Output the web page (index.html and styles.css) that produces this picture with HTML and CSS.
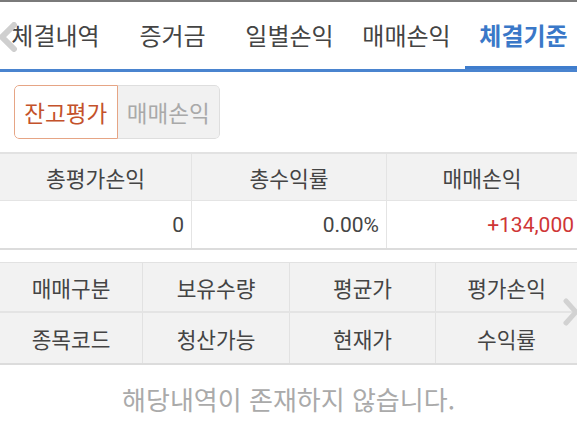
FILE: index.html
```html
<!DOCTYPE html>
<html lang="ko">
<head>
<meta charset="utf-8">
<link rel="stylesheet" href="styles.css">
</head>
<body>
<div class="page">
  <nav class="tabs">
    <div class="tab">체결내역</div>
    <div class="tab">증거금</div>
    <div class="tab">일별손익</div>
    <div class="tab">매매손익</div>
    <div class="tab active">체결기준</div>
    <svg class="chev chev-left" width="20" height="30" viewBox="0 0 20 30"><path d="M16 3 L4 15 L16 27" fill="none" stroke="#cfcfcf" stroke-width="6" stroke-linecap="round" stroke-linejoin="round"/></svg>
  </nav>

  <div class="seg-wrap">
    <div class="seg">
      <div class="seg-btn on">잔고평가</div>
      <div class="seg-btn">매매손익</div>
    </div>
  </div>

  <div class="sum">
    <div class="sum-h">총평가손익</div>
    <div class="sum-h">총수익률</div>
    <div class="sum-h">매매손익</div>
    <div class="sum-d">0</div>
    <div class="sum-d">0.00%</div>
    <div class="sum-d red last">+134,000</div>
  </div>

  <div class="list-wrap">
    <div class="list">
      <div class="lh">매매구분</div>
      <div class="lh">보유수량</div>
      <div class="lh">평균가</div>
      <div class="lh">평가손익</div>
      <div class="lh">종목코드</div>
      <div class="lh">청산가능</div>
      <div class="lh">현재가</div>
      <div class="lh">수익률</div>
    </div>
    <svg class="chev chev-right" width="16" height="28" viewBox="0 0 16 28"><path d="M3 3 L13 14 L3 25" fill="none" stroke="#d2d2d2" stroke-width="5" stroke-linecap="round" stroke-linejoin="round"/></svg>
  </div>

  <div class="empty">해당내역이 존재하지 않습니다.</div>
</div>
</body>
</html>
```

FILE: styles.css
```css
* { box-sizing: border-box; }
html, body { margin: 0; padding: 0; background: #fff; }
body {
  font-family: Roboto, "Noto Sans CJK KR", sans-serif;
  color: #444;
  width: 577px;
  height: 423px;
  overflow: hidden;
}
.page { width: 577px; }

.tabs {
  position: relative;
  display: flex;
  border-top: 2px solid #7a7a7a;
  border-bottom: 3px solid #4a84cf;
  height: 72px;
  overflow: hidden;
}
.tab {
  flex: 0 0 117px;
  display: flex;
  align-items: center;
  justify-content: center;
  font-size: 24px;
  color: #444;
  padding-bottom: 3px;
  white-space: nowrap;
}
.tab:first-child { margin-left: -3px; }
.tab.active {
  color: #3a78c8;
  font-weight: bold;
  box-shadow: inset 0 -3px 0 #3f7dcd;
}
.chev { position: absolute; }
.chev-left { left: -2px; top: 20px; }

.seg-wrap { padding: 13px 14px 13px; }
.seg {
  display: flex;
  width: 206px;
  height: 54px;
  border-radius: 5px;
  overflow: hidden;
}
.seg-btn {
  flex: 1;
  display: flex;
  align-items: center;
  justify-content: center;
  font-size: 22.5px;
  background: #f1f1f1;
  color: #a9a9a9;
  border: 1px solid #dedede;
  border-left: none;
  border-radius: 0 5px 5px 0;
  white-space: nowrap;
}
.seg-btn.on {
  background: #fff;
  color: #c4522b;
  border: 1px solid #e6a585;
  border-radius: 5px 0 0 5px;
}

.sum {
  display: grid;
  grid-template-columns: 192px 195px 1fr;
  border-top: 2px solid #e2e2e2;
  border-bottom: 2px solid #dcdcdc;
}
.sum-h {
  height: 47px;
  display: flex;
  align-items: center;
  justify-content: center;
  background: #f2f2f2;
  font-size: 21.5px;
  color: #444;
  border-bottom: 1px solid #e4e4e4;
  border-right: 1px solid #e4e4e4;
}
.sum-d {
  height: 47px;
  display: flex;
  align-items: center;
  justify-content: flex-end;
  padding-right: 7px;
  font-size: 21px;
  color: #444;
  border-right: 1px solid #e4e4e4;
}
.sum-h:nth-child(3), .sum-d.last { border-right: none; }
.sum-d.last { padding-right: 3px; }
.red { color: #cf3636; }

.list-wrap { position: relative; margin-top: 12px; }
.list {
  display: grid;
  grid-template-columns: 143px 147px 146px 1fr;
  border-top: 1px solid #e2e2e2;
  border-bottom: 2px solid #dcdcdc;
  background: #f2f2f2;
}
.lh {
  height: 50px;
  display: flex;
  align-items: center;
  justify-content: center;
  font-size: 21.4px;
  color: #444;
  border-right: 1px solid #e2e2e2;
}
.lh:nth-child(-n+4) { border-bottom: 2px solid #e4e4e4; }
.lh:nth-child(4n) { border-right: none; }
.chev-right { right: -2px; top: 36px; }

.empty {
  text-align: center;
  font-family: "Noto Sans CJK KR", sans-serif;
  font-size: 26px;
  color: #aaa;
  padding-top: 15px;
  white-space: nowrap;
}
```
